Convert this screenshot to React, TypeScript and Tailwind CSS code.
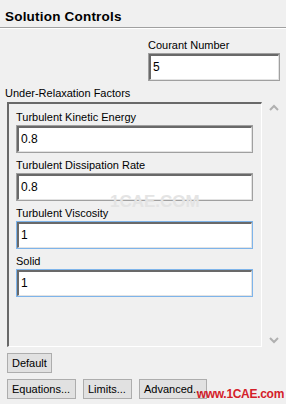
import React from 'react';

const font = { fontFamily: '"Liberation Sans", Arial, sans-serif' };

function Field({ label, value, focus }: { label: string; value: string; focus?: boolean }) {
  return (
    <div className="flex flex-col">
      <div className="h-[15px] text-[11px] leading-[15px] text-black">{label}</div>
      <div
        className={`h-[28px] border bg-white ${focus ? 'border-[#7eb4ea]' : 'border-[#a0a0a0]'}`}
      >
        <div className="h-full border-t-2 border-l-2 border-r border-b border-t-[#696969] border-l-[#696969] border-r-[#e3e3e3] border-b-[#e3e3e3] pl-[2px] text-[12px] leading-[22px]">
          {value}
        </div>
      </div>
    </div>
  );
}

function Btn({ children, w }: { children: React.ReactNode; w: string }) {
  return (
    <div
      className={`${w} h-[20px] border border-[#adadad] bg-[#e1e1e1] pl-[4px] text-[11px] leading-[18px] text-black`}
    >
      {children}
    </div>
  );
}

export default function App() {
  return (
    <div className="relative w-[286px] h-[404px] bg-[#f0f0f0] overflow-hidden text-black" style={font}>
      <div className="h-[27px] pl-[5px] pt-[9px] text-[13.5px] font-bold leading-[16px] tracking-[0.2px]">
        Solution Controls
      </div>
      <div className="h-px bg-[#a0a0a0]" />
      <div className="h-px bg-white" />

      <div className="ml-[148px] mr-[6px] mt-[9px]">
        <Field label="Courant Number" value="5" />
      </div>

      <div className="mt-[6px] pl-[5px] text-[11px] leading-[13px]">Under-Relaxation Factors</div>

      <div className="mt-[2px] flex h-[245px]">
        <div className="ml-[7px] w-[255px] border-t-2 border-l-2 border-r border-b border-t-[#696969] border-l-[#696969] border-r-white border-b-white">
          <div className="flex flex-col gap-[5px] pl-[7px] pr-[8px] pt-[6px]">
            <Field label="Turbulent Kinetic Energy" value="0.8" />
            <Field label="Turbulent Dissipation Rate" value="0.8" />
            <Field label="Turbulent Viscosity" value="1" focus />
            <Field label="Solid" value="1" focus />
          </div>
        </div>
        <div className="flex flex-1 flex-col items-center justify-between pb-[3px] pt-[2px]">
          <svg width="10" height="8" viewBox="0 0 10 8">
            <path d="M1 6 L5 2 L9 6" fill="none" stroke="#b0b0b0" strokeWidth="2" />
          </svg>
          <svg width="10" height="8" viewBox="0 0 10 8">
            <path d="M1 2 L5 6 L9 2" fill="none" stroke="#b0b0b0" strokeWidth="2" />
          </svg>
        </div>
      </div>

      <div className="ml-[7px] mt-[6px]">
        <Btn w="w-[45px]">Default</Btn>
      </div>
      <div className="ml-[7px] mt-[6px] flex gap-[7px]">
        <Btn w="w-[69px]">Equations...</Btn>
        <Btn w="w-[49px]">Limits...</Btn>
        <Btn w="w-[68px]">Advanced...</Btn>
      </div>

      <div className="absolute left-[110px] top-[194px] text-[17px] font-bold leading-[16px] text-[#e4e4e4]">
        1CAE.COM
      </div>
      <div className="absolute right-[2px] bottom-[3px] text-[12px] font-bold leading-[13px] tracking-[-0.3px] text-[#d4202a]">
        www.1CAE.com
      </div>
    </div>
  );
}
